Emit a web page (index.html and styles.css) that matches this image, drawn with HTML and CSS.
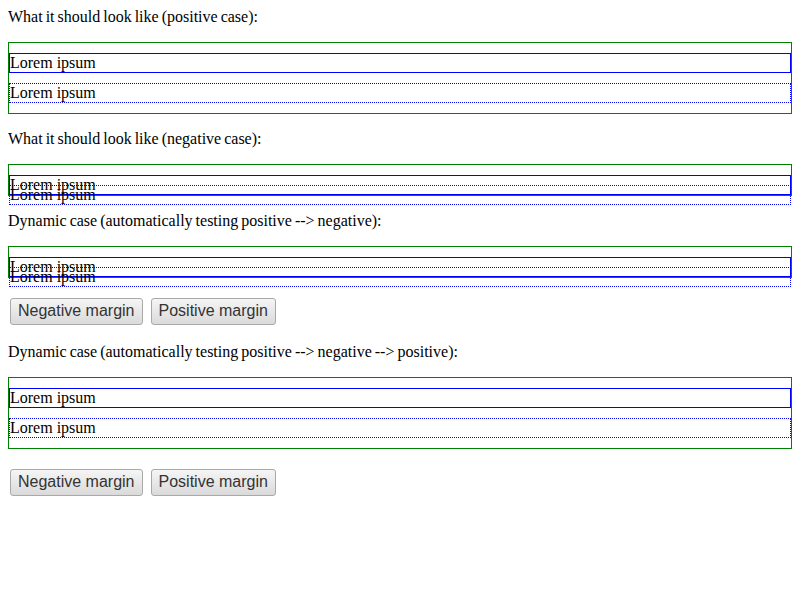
FILE: index.html
```html
<!DOCTYPE html>
<html>
<head>
<meta charset="utf-8">
<link rel="stylesheet" href="styles.css">
</head>
<body>
<p class="label first">What it should look like (positive case):</p>
<div class="container">
  <div class="box solid">Lorem ipsum</div>
  <div class="box dotted">Lorem ipsum</div>
</div>
<p class="label">What it should look like (negative case):</p>
<div class="container">
  <div class="box solid">Lorem ipsum</div>
  <div class="box dotted neg">Lorem ipsum</div>
</div>
<p class="label">Dynamic case (automatically testing positive --&gt; negative):</p>
<div class="container">
  <div class="box solid">Lorem ipsum</div>
  <div class="box dotted neg">Lorem ipsum</div>
</div>
<div class="controls">
  <button class="btn">Negative margin</button>
  <button class="btn">Positive margin</button>
</div>
<p class="label">Dynamic case (automatically testing positive --&gt; negative --&gt; positive):</p>
<div class="container">
  <div class="box solid">Lorem ipsum</div>
  <div class="box dotted">Lorem ipsum</div>
</div>
<div class="controls">
  <button class="btn">Negative margin</button>
  <button class="btn">Positive margin</button>
</div>
</body>
</html>
```

FILE: styles.css
```css
body {
  margin: 8px;
  font-family: "Liberation Serif", "Times New Roman", serif;
  font-size: 16px;
  color: #000;
  background: #fff;
}
.label {
  margin: 16px 0;
  line-height: 18px;
  word-spacing: -1px;
}
.label.first {
  margin-top: 0;
}
.container {
  border: 1px solid #008000;
}
.box {
  margin: 10px 0;
  line-height: 18px;
}
.solid {
  border: 1px solid #0000ff;
}
.dotted {
  border: 1px dotted #0000ff;
}
.neg {
  margin: -20px 0 -10px;
}
.controls {
  margin: 16px 0;
  padding-bottom: 2px;
  font-size: 16px;
  line-height: 31px;
}
.btn {
  font-family: "Liberation Sans", Arial, sans-serif;
  font-size: 16px;
  color: #333;
  margin: 0 2px;
  padding: 3px 7px;
  height: 27px;
  border: 1px solid #a9a9a9;
  border-radius: 3px;
  background: linear-gradient(#f5f5f5, #dadada);
  vertical-align: middle;
}
```
